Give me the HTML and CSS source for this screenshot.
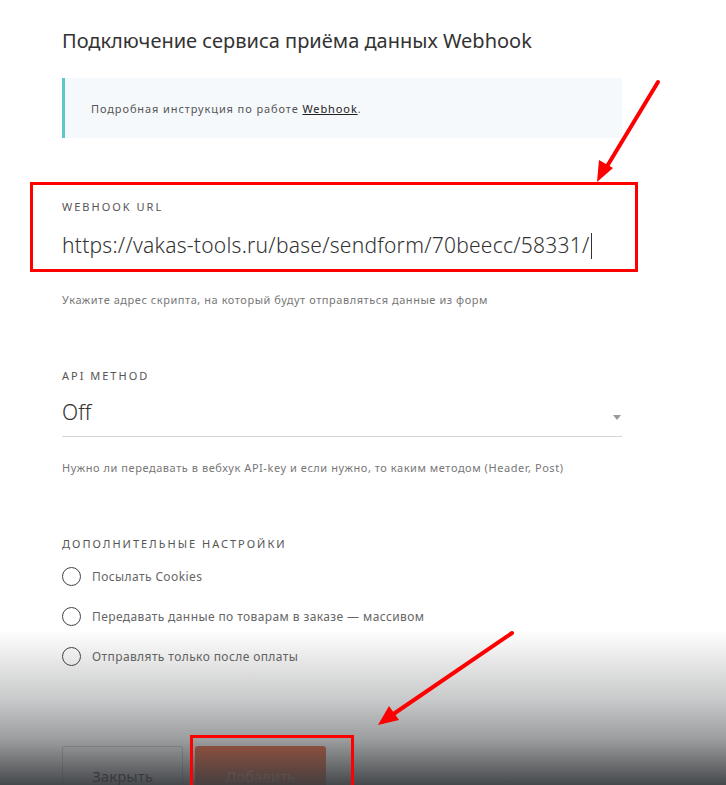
FILE: index.html
```html
<!DOCTYPE html>
<html lang="ru">
<head>
  <meta charset="UTF-8">
  <title>Webhook</title>
  <link rel="stylesheet" href="styles.css">
</head>
<body>

  <div class="modal">
    <h1 class="title">Подключение сервиса приёма данных Webhook</h1>

    <div class="info">
      <span>Подробная инструкция по работе <a href="#">Webhook</a>.</span>
    </div>

    <div class="field field-url">
      <div class="label">Webhook URL</div>
      <div class="input">https://vakas-tools.ru/base/sendform/70beecc/58331/<span class="caret"></span></div>
      <div class="hint">Укажите адрес скрипта, на который будут отправляться данные из форм</div>
    </div>

    <div class="field">
      <div class="label">API method</div>
      <div class="input select">Off<span class="select-arrow"></span></div>
      <div class="hint">Нужно ли передавать в вебхук API-key и если нужно, то каким методом (Header, Post)</div>
    </div>

    <div class="field">
      <div class="label">Дополнительные настройки</div>
      <div class="checks">
        <div class="check"><span class="circle"></span>Посылать Cookies</div>
        <div class="check"><span class="circle"></span>Передавать данные по товарам в заказе — массивом</div>
        <div class="check"><span class="circle"></span>Отправлять только после оплаты</div>
      </div>
    </div>

    <div class="buttons">
      <button class="btn btn-close">Закрыть</button>
      <button class="btn btn-add">Добавить</button>
    </div>
  </div>

  <!-- затемнение снизу (кадр из видео) -->
  <div class="shade"></div>

  <!-- пометки поверх скриншота -->
  <div class="mark mark-url"></div>
  <div class="mark mark-btn"></div>
  <svg class="arrows" width="726" height="785" viewBox="0 0 726 785">
    <line x1="658" y1="82" x2="606" y2="168" />
    <polygon points="597,182 599,160 613,168" />
    <line x1="512" y1="633" x2="392" y2="715" />
    <polygon points="378,725 389,706 399,720" />
  </svg>

</body>
</html>
```

FILE: styles.css
```css
body {
  margin: 0;
  background: #fff;
  font-family: "Noto Sans", "Open Sans", sans-serif;
  color: #333;
  overflow: hidden;
  height: 785px;
  position: relative;
}

.modal {
  width: 560px;
  padding-left: 62px;
}

.title {
  margin: 29px 0 0;
  font-size: 20px;
  line-height: 24px;
  font-weight: 400;
  color: #333;
}

.info {
  margin-top: 25px;
  height: 60px;
  display: flex;
  align-items: center;
  padding-left: 26px;
  border-left: 3px solid #5ec7cd;
  background: #f6f9fc;
  font-size: 11px;
  letter-spacing: 0.9px;
  color: #555;
}

.info a {
  color: #222;
  text-decoration: underline;
}

.field {
  margin-top: 62px;
}

.label {
  font-size: 11px;
  line-height: 14px;
  text-transform: uppercase;
  letter-spacing: 2px;
  color: #555;
}

.input {
  margin-top: 16px;
  font-size: 21px;
  line-height: 30px;
  font-weight: 300;
  color: #333;
  padding-bottom: 8px;
  border-bottom: 1px solid #d6d6d6;
  position: relative;
  letter-spacing: 0;
}

.caret {
  display: inline-block;
  width: 1px;
  height: 26px;
  background: #333;
  vertical-align: -6px;
  margin-left: 2px;
}

.field-url .input {
  letter-spacing: 0.25px;
  border-bottom-color: transparent;
}

.select {
  margin-top: 14px;
  padding-bottom: 9px;
}

.select-arrow {
  position: absolute;
  right: 1px;
  top: 18px;
  border-left: 4px solid transparent;
  border-right: 4px solid transparent;
  border-top: 5px solid #9a9a9a;
}

.hint {
  margin-top: 24px;
  font-size: 11px;
  line-height: 14px;
  letter-spacing: 0.55px;
  color: #777;
}

.checks {
  margin-top: 15px;
  display: flex;
  flex-direction: column;
  gap: 20px;
}

.check {
  display: flex;
  align-items: center;
  height: 20px;
  font-size: 12px;
  letter-spacing: 0.4px;
  color: #666;
}

.circle {
  width: 17px;
  height: 17px;
  border: 1.5px solid #444;
  border-radius: 50%;
  margin-right: 11px;
}

.buttons {
  margin-top: 80px;
  display: flex;
  gap: 12px;
}

.btn {
  height: 60px;
  font-family: inherit;
  font-size: 15px;
  border-radius: 3px;
  cursor: pointer;
}

.btn-close {
  width: 121px;
  background: #fff;
  border: 1px solid #d0d0d0;
  color: #222;
}

.btn-add {
  width: 131px;
  background: #f4663c;
  border: none;
  color: #ffb89c;
}

.shade {
  position: absolute;
  left: 0;
  right: 0;
  top: 630px;
  height: 155px;
  background: linear-gradient(to bottom,
    rgba(58, 61, 64, 0) 0,
    rgba(58, 61, 64, 0.28) 70px,
    rgba(58, 61, 64, 0.51) 110px,
    rgba(58, 61, 64, 0.94) 155px);
}

.mark {
  position: absolute;
  border: 3px solid #f00;
}

.mark-url {
  left: 30px;
  top: 182px;
  width: 602px;
  height: 84px;
}

.mark-btn {
  left: 190px;
  top: 735px;
  width: 158px;
  height: 60px;
}

.arrows {
  position: absolute;
  left: 0;
  top: 0;
}

.arrows line {
  stroke: #f00;
  stroke-width: 4;
  stroke-linecap: round;
}

.arrows polygon {
  fill: #f00;
}
```
